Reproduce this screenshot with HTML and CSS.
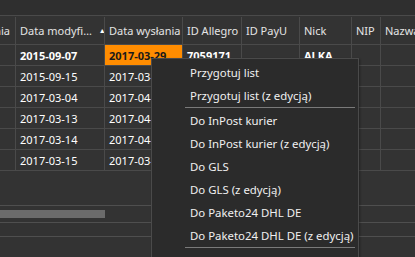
FILE: index.html
```html
<!DOCTYPE html>
<html lang="pl">
<head>
	<meta charset="UTF-8">
	<title>Zamówienia</title>
	<link rel="stylesheet" href="styles.css">
</head>
<body>
	<div class="view">
		<div class="topbar"></div>
		<div class="grid">
			<div class="row row--head">
				<div class="cell cell--first"><span class="clip">nia</span></div>
				<div class="cell c-mod">Data modyfi… <span class="sort">▲</span></div>
				<div class="cell c-send">Data wysłania</div>
				<div class="cell c-alle">ID Allegro</div>
				<div class="cell c-payu">ID PayU</div>
				<div class="cell c-nick">Nick</div>
				<div class="cell c-nip">NIP</div>
				<div class="cell c-name">Nazwa</div>
			</div>
			<div class="row row--bold">
				<div class="cell cell--first"></div>
				<div class="cell c-mod">2015-09-07</div>
				<div class="cell c-send cell--hit">2017-03-29</div>
				<div class="cell c-alle">7059171</div>
				<div class="cell c-payu"></div>
				<div class="cell c-nick">ALKA</div>
				<div class="cell c-nip"></div>
				<div class="cell c-name"></div>
			</div>
			<div class="row">
				<div class="cell cell--first"></div>
				<div class="cell c-mod">2015-09-15</div>
				<div class="cell c-send">2017-03-31</div>
				<div class="cell c-alle"></div>
				<div class="cell c-payu"></div>
				<div class="cell c-nick"></div>
				<div class="cell c-nip"></div>
				<div class="cell c-name"></div>
			</div>
			<div class="row">
				<div class="cell cell--first"></div>
				<div class="cell c-mod">2017-03-04</div>
				<div class="cell c-send">2017-04-03</div>
				<div class="cell c-alle"></div>
				<div class="cell c-payu"></div>
				<div class="cell c-nick"></div>
				<div class="cell c-nip"></div>
				<div class="cell c-name"></div>
			</div>
			<div class="row">
				<div class="cell cell--first"></div>
				<div class="cell c-mod">2017-03-13</div>
				<div class="cell c-send">2017-04-05</div>
				<div class="cell c-alle"></div>
				<div class="cell c-payu"></div>
				<div class="cell c-nick"></div>
				<div class="cell c-nip"></div>
				<div class="cell c-name"></div>
			</div>
			<div class="row">
				<div class="cell cell--first"></div>
				<div class="cell c-mod">2017-03-14</div>
				<div class="cell c-send">2017-04-06</div>
				<div class="cell c-alle"></div>
				<div class="cell c-payu"></div>
				<div class="cell c-nick"></div>
				<div class="cell c-nip"></div>
				<div class="cell c-name"></div>
			</div>
			<div class="row">
				<div class="cell cell--first"></div>
				<div class="cell c-mod">2017-03-15</div>
				<div class="cell c-send">2017-03-31</div>
				<div class="cell c-alle"></div>
				<div class="cell c-payu"></div>
				<div class="cell c-nick"></div>
				<div class="cell c-nip"></div>
				<div class="cell c-name"></div>
			</div>
		</div>
		<div class="empty"></div>
		<div class="scroll">
			<div class="scroll__thumb"></div>
		</div>
		<div class="statusbar"></div>

		<ul class="menu">
			<li class="menu__item">Przygotuj list</li>
			<li class="menu__item">Przygotuj list (z edycją)</li>
			<li class="menu__sep"></li>
			<li class="menu__item">Do InPost kurier</li>
			<li class="menu__item">Do InPost kurier (z edycją)</li>
			<li class="menu__item">Do GLS</li>
			<li class="menu__item">Do GLS (z edycją)</li>
			<li class="menu__item">Do Paketo24 DHL DE</li>
			<li class="menu__item">Do Paketo24 DHL DE (z edycją)</li>
			<li class="menu__sep"></li>
			<li class="menu__item">Wydruk etykiety</li>
		</ul>
	</div>
</body>
</html>
```

FILE: styles.css
```css
* { box-sizing: border-box }
body {
	margin: 0;
	background: #333;
	color: #fff;
	font-family: 'Noto Sans', 'Segoe UI', sans-serif;
	font-size: 11px;
	overflow: hidden;
}
.view {
	position: relative;
	width: 415px;
	height: 257px;
	overflow: hidden;
}
.topbar {
	height: 16px;
	background: #2f2f2f;
	border-bottom: 1px solid #4a4a4a;
}
.row {
	display: grid;
	grid-template-columns: 16px 89px 78px 59px 58px 52px 29px 1fr;
	height: 21px;
	border-bottom: 1px solid #4a4a4a;
}
.row--head {
	height: 29px;
	padding-top: 1px;
	color: #e4e4e4;
}
.cell {
	display: flex;
	align-items: center;
	padding-left: 4px;
	border-right: 1px solid #4a4a4a;
	white-space: nowrap;
	overflow: hidden;
}
.cell--first {
	padding-left: 0;
	justify-content: flex-end;
	padding-right: 5px;
}
.sort {
	margin-left: 7px;
	font-size: 7px;
	color: #fff;
}
.row--bold {
	font-weight: 700;
}
.cell--hit {
	background: #ff8c00;
	color: #1a1a1a;
}
.c-name {
	border-right: 0;
}
.empty {
	height: 35px;
	border-bottom: 1px solid #4f4f4f;
}
.scroll {
	height: 17px;
	padding-top: 4px;
	border-bottom: 1px solid #4f4f4f;
}
.scroll__thumb {
	width: 105px;
	height: 8px;
	background: #6b6b6b;
}
.statusbar {
	height: 14px;
	border-bottom: 1px solid #4f4f4f;
}
.menu {
	position: absolute;
	left: 151px;
	top: 58px;
	width: 208px;
	margin: 0;
	padding: 2px 0 0;
	list-style: none;
	background: #2b2b2b;
	border: 1px solid #4a4a4a;
	color: #f0f0f0;
	font-size: 11.4px;
	box-shadow: 1px 1px 2px rgba(0, 0, 0, .35);
}
.menu__item {
	height: 23px;
	line-height: 23px;
	padding-left: 38px;
	white-space: nowrap;
}
.menu__sep {
	height: 1px;
	margin: 0 3px 1px 33px;
	background: #7a7a7a;
}
```
